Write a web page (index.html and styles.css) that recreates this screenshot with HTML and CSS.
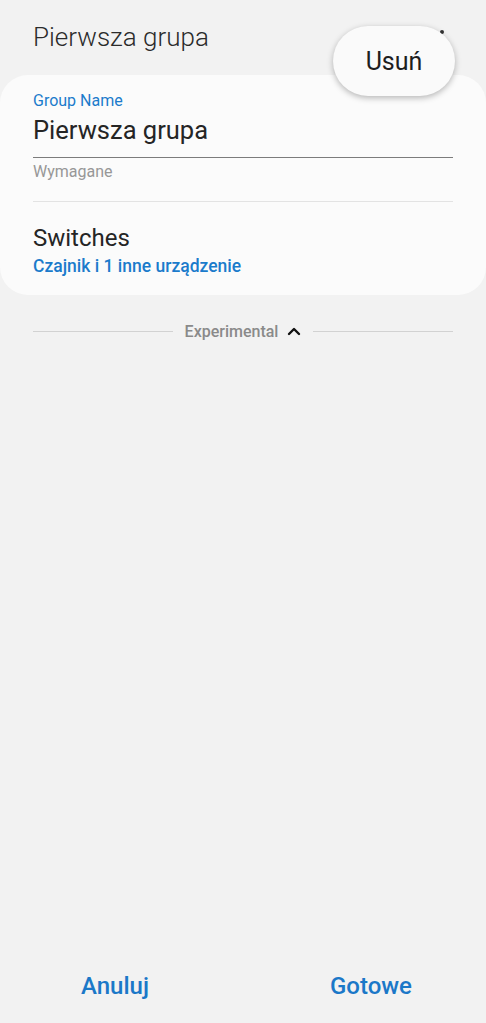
FILE: index.html
```html
<!DOCTYPE html>
<html lang="pl">
<head>
  <meta charset="UTF-8">
  <meta name="viewport" content="width=device-width, initial-scale=1.0">
  <title>Pierwsza grupa</title>
  <link rel="stylesheet" href="styles.css">
</head>
<body>
  <div class="page">
    <header class="topbar">
      <h1 class="title">Pierwsza grupa</h1>
      <span class="more">
        <i></i><i></i><i></i>
      </span>
    </header>

    <div class="menu">Usuń</div>

    <section class="card">
      <div class="field">
        <label class="field-label" for="groupName">Group Name</label>
        <div class="field-input" id="groupName">Pierwsza grupa</div>
      </div>
      <div class="field-help">Wymagane</div>

      <div class="divider"></div>

      <div class="item">
        <div class="item-title">Switches</div>
        <div class="item-sub">Czajnik i 1 inne urządzenie</div>
      </div>
    </section>

    <div class="section-toggle">
      <span class="line"></span>
      <span class="toggle-text">Experimental</span>
      <svg class="chevron" width="14" height="10" viewBox="0 0 14 10">
        <path d="M2 8 L7 3 L12 8" fill="none" stroke="#111" stroke-width="2.4" stroke-linecap="round" stroke-linejoin="round"/>
      </svg>
      <span class="line"></span>
    </div>

    <footer class="actions">
      <button class="action">Anuluj</button>
      <button class="action">Gotowe</button>
    </footer>
  </div>
</body>
</html>
```

FILE: styles.css
```css
body {
  margin: 0;
  background-color: #f2f2f2;
  font-family: Roboto, "Noto Sans", Arial, sans-serif;
  color: #252525;
}
.page {
  position: relative;
  min-height: 100vh;
  display: flex;
  flex-direction: column;
}
.topbar {
  height: 75px;
  display: flex;
  align-items: center;
  justify-content: space-between;
  padding: 0 42px 0 33px;
  box-sizing: border-box;
}
.title {
  margin: 0 0 2px 0;
  font-size: 26px;
  font-weight: 300;
  line-height: 30px;
  color: #2b2b2b;
}
.more {
  display: flex;
  flex-direction: column;
  gap: 4px;
  align-self: flex-start;
  margin-top: 30px;
}
.more i {
  display: block;
  width: 4px;
  height: 4px;
  border-radius: 50%;
  background-color: #333;
}
.menu {
  position: absolute;
  top: 26px;
  left: 333px;
  width: 122px;
  height: 70px;
  border-radius: 35px;
  background-color: #fafafa;
  box-shadow: 0 2px 6px rgba(0, 0, 0, 0.28);
  display: flex;
  align-items: center;
  justify-content: center;
  font-size: 25px;
  color: #1e1e1e;
  z-index: 2;
}
.card {
  background-color: #fbfbfb;
  border-radius: 28px;
  padding: 16px 33px 18px;
}
.field {
  border-bottom: 1px solid #7c7c7c;
  padding-bottom: 12px;
}
.field-label {
  display: block;
  font-size: 16px;
  line-height: 19px;
  color: #1b7bcb;
}
.field-input {
  margin-top: 5px;
  font-size: 25.5px;
  line-height: 30px;
  color: #252525;
}
.field-help {
  margin-top: 4px;
  font-size: 16px;
  line-height: 19px;
  color: #979797;
}
.divider {
  height: 1px;
  background-color: #e3e3e3;
  margin-top: 20px;
}
.item {
  padding-top: 22px;
}
.item-title {
  font-size: 24px;
  line-height: 28px;
  color: #252525;
}
.item-sub {
  margin-top: 4px;
  font-size: 17.5px;
  line-height: 21px;
  font-weight: 500;
  color: #1b7bcb;
}
.section-toggle {
  display: flex;
  align-items: center;
  gap: 12px;
  margin: 26px 33px 0;
  height: 20px;
}
.line {
  flex: 1;
  height: 1px;
  background-color: #d2d2d2;
}
.toggle-text {
  font-size: 16px;
  font-weight: 500;
  color: #8a8a8a;
}
.chevron {
  margin-left: -3px;
}
.actions {
  margin-top: auto;
  display: flex;
  justify-content: center;
  gap: 40px;
  padding-bottom: 22px;
}
.action {
  width: 216px;
  background: none;
  border: none;
  padding: 0;
  font-family: inherit;
  font-size: 24px;
  line-height: 30px;
  font-weight: 500;
  color: #1b78c8;
  cursor: pointer;
}
```
